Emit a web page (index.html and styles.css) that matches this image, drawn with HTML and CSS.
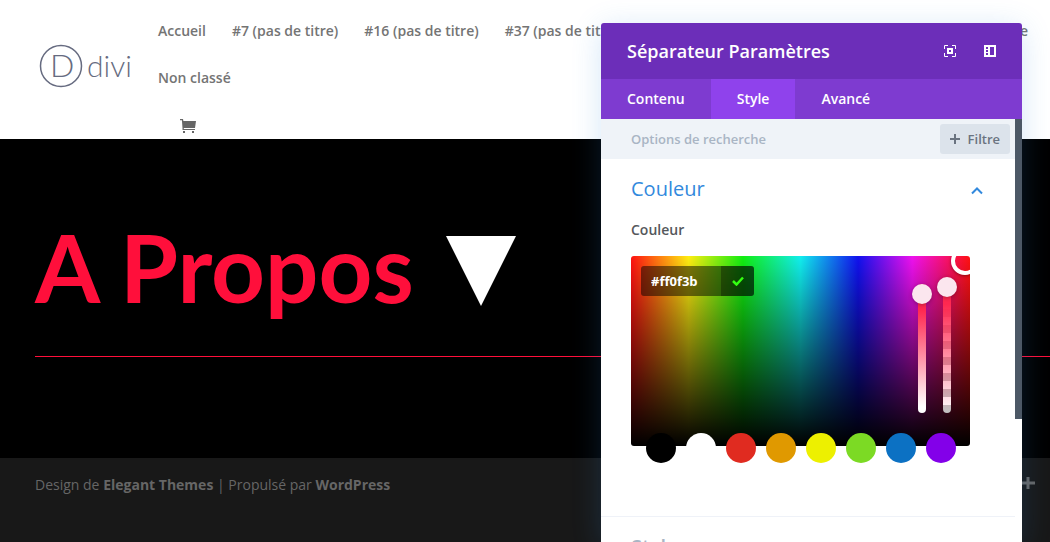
FILE: index.html
```html
<!DOCTYPE html>
<html lang="fr">
<head>
<meta charset="utf-8">
<meta name="viewport" content="width=device-width, initial-scale=1">
<title>A Propos</title>
<link rel="stylesheet" href="styles.css">
</head>
<body>
<header class="site-header">
  <a class="logo" href="#" aria-label="Divi">
    <svg width="94" height="44" viewBox="0 0 94 44">
      <circle cx="22" cy="22" r="20.5" fill="none" stroke="currentColor" stroke-width="1.5"/>
      <text class="logo-letter" x="11" y="33">D</text>
      <text class="logo-word" x="48" y="33">divi</text>
    </svg>
  </a>
  <div class="menu">
    <nav>
      <ul class="nav-list">
        <li><a href="#">Accueil</a></li>
        <li><a href="#">#7 (pas de titre)</a></li>
        <li><a href="#">#16 (pas de titre)</a></li>
        <li><a href="#">#37 (pas de titre)</a></li>
        <li class="nav-last"><a href="#">Page d’exemple</a></li>
        <li><a href="#">Non classé</a></li>
      </ul>
    </nav>
    <a class="cart" href="#" aria-label="Panier">
      <svg width="16" height="14" viewBox="0 0 16 14" fill="currentColor">
        <path d="M0 0h3l.4 2H16l-1 7H3.800v1H15v1H2.500V9L1.900 1.300H0z"/>
        <rect x="3" y="12" width="2" height="2"/><rect x="12" y="12" width="2" height="2"/>
      </svg>
    </a>
  </div>
</header>

<main class="hero">
  <div class="hero-title">
    <h1>A Propos</h1>
    <svg width="70" height="70" viewBox="0 0 70 70"><path d="M0 0h70L35 70z" fill="#fff"/></svg>
  </div>
  <hr class="divider">
</main>

<footer class="site-footer">
  <p>Design de <a href="#">Elegant Themes</a> | Propulsé par <a href="#">WordPress</a></p>
  <a class="more" href="#" aria-label="Plus">
    <svg width="14" height="12" viewBox="0 0 14 12"><path d="M7 0v12M0 6h14" stroke="currentColor" stroke-width="3"/></svg>
  </a>
</footer>

<aside class="panel">
  <header class="panel-head">
    <h2>Séparateur Paramètres</h2>
    <div class="panel-actions">
      <button type="button" aria-label="Plein écran">
        <svg width="12" height="12" viewBox="0 0 12 12" fill="none" stroke="currentColor">
          <path d="M.5 4V.5H4M8 .5h3.500V4M11.500 8v3.500H8M4 11.500H.5V8"/>
          <path d="M4 4h4v4H4z" stroke-width="2"/>
        </svg>
      </button>
      <button type="button" aria-label="Position">
        <svg width="12" height="12" viewBox="0 0 12 12" fill="currentColor">
          <path fill-rule="evenodd" d="M0 0h12v12H0zM6 2v8h4V2zM2 2v2h2V2zM2 5v2h2V5zM2 8v2h2V8z"/>
        </svg>
      </button>
    </div>
  </header>
  <div class="tabs" role="tablist">
    <button type="button" role="tab">Contenu</button>
    <button type="button" role="tab" class="active" aria-selected="true">Style</button>
    <button type="button" role="tab">Avancé</button>
  </div>
  <div class="panel-body">
    <div class="panel-scroll">
      <div class="search">
        <input type="text" placeholder="Options de recherche" aria-label="Options de recherche">
        <button type="button" class="filter">
          <svg width="10" height="10" viewBox="0 0 10 10"><path d="M5 0v10M0 5h10" stroke="currentColor" stroke-width="2"/></svg>
          Filtre
        </button>
      </div>
      <section class="group">
        <button type="button" class="group-title">
          Couleur
          <svg width="12" height="8" viewBox="0 0 12 8"><path d="M1 6.500l5-5 5 5" fill="none" stroke="currentColor" stroke-width="2"/></svg>
        </button>
        <label class="field-label" for="hex">Couleur</label>
        <div class="picker">
          <span class="picker-point"></span>
          <div class="hex">
            <input id="hex" type="text" value="#ff0f3b">
            <button type="button" aria-label="Valider">
              <svg width="12" height="10" viewBox="0 0 12 10"><path d="M1 5l3.500 3.500L11 1.500" fill="none" stroke="currentColor" stroke-width="2.500"/></svg>
            </button>
          </div>
          <div class="sliders">
            <input class="slider saturation" type="range" min="0" max="100" value="0" aria-label="Saturation">
            <input class="slider alpha" type="range" min="0" max="100" value="0" aria-label="Opacité">
          </div>
        </div>
        <div class="swatches">
          <button type="button" class="black" aria-label="Noir"></button>
          <button type="button" class="white" aria-label="Blanc"></button>
          <button type="button" class="red" aria-label="Rouge"></button>
          <button type="button" class="orange" aria-label="Orange"></button>
          <button type="button" class="yellow" aria-label="Jaune"></button>
          <button type="button" class="green" aria-label="Vert"></button>
          <button type="button" class="blue" aria-label="Bleu"></button>
          <button type="button" class="purple" aria-label="Violet"></button>
        </div>
      </section>
      <section class="group closed">
        <button type="button" class="group-title">Style</button>
      </section>
    </div>
    <div class="scrollbar"></div>
  </div>
</aside>
</body>
</html>
```
FILE: styles.css
```css
* { box-sizing: border-box; }

body {
  margin: 0;
  height: 100vh;
  overflow: hidden;
  display: flex;
  flex-direction: column;
  position: relative;
  background: #fff;
  color: #666;
  font: 14px/24px "Open Sans", "Noto Sans", sans-serif;
}

a { color: inherit; text-decoration: none; }
button, input { font: inherit; color: inherit; border: 0; padding: 0; margin: 0; background: none; }
svg { display: block; }
h1, h2, p { margin: 0; }

.site-header {
  display: flex;
  gap: 25px;
  padding: 19px 22px 6px 39px;
}
.logo { color: #666b80; padding-top: 25px; }
.logo-letter, .logo-word { font-family: Lato, sans-serif; font-weight: 300; fill: currentColor; }
.logo-letter { font-size: 32px; }
.logo-word { font-size: 30px; }
.menu { flex: 1; }
.nav-list {
  display: flex;
  flex-wrap: wrap;
  gap: 23px 26px;
  margin: 0;
  padding: 0;
  list-style: none;
  color: #747474;
  font-weight: 600;
}
.nav-last { flex: 1 0 350px; text-align: right; }
.cart { display: block; width: 16px; margin: 29px 0 0 22px; }

.hero {
  background: #000;
  padding: 69px 0 101px 35px;
}
.hero-title { display: flex; align-items: center; gap: 32px; }
.hero-title h1 {
  padding-bottom: 8px;
  color: #ff0f3b;
  font: 700 94px/118px "Trebuchet MS", Lato, sans-serif;
}
.divider { margin: 22px 0 0; border: 0; height: 1px; background: #ff0f3b; }

.site-footer {
  flex: 1;
  display: flex;
  align-items: flex-start;
  justify-content: space-between;
  padding: 15px 15px 0 35px;
  background: #181818;
}
.site-footer a { font-weight: 700; }
.site-footer .more { padding-top: 4px; }

.panel {
  position: absolute;
  top: 23px;
  right: 28px;
  bottom: 0;
  width: 421px;
  display: flex;
  flex-direction: column;
  overflow: hidden;
  border-radius: 3px 3px 0 0;
  background: #fff;
  box-shadow: 0 5px 30px rgba(43, 135, 218, 0.2);
  font-weight: 600;
}
.panel-head {
  flex: none;
  display: flex;
  align-items: center;
  justify-content: space-between;
  padding: 16px 26px;
  background: #6c2eb9;
  color: #fff;
}
.panel-head h2 { font-size: 18px; font-weight: 600; }
.panel-actions { display: flex; gap: 28px; }
.tabs { flex: none; display: flex; background: #7e3bd0; color: #fff; }
.tabs button { padding: 8px 26px; font-weight: 600; }
.tabs .active { background: #8f42ec; }

.panel-body { flex: 1; min-height: 0; display: flex; }
.panel-scroll { flex: 1; min-width: 0; overflow: hidden; }
.scrollbar { width: 7px; height: 300px; background: #4c5866; }

.search {
  display: flex;
  align-items: center;
  padding: 5px 5px 5px 30px;
  background: #eff3f8;
  font-size: 13px;
}
.search input { flex: 1; min-width: 0; }
.search input::placeholder { color: #a9b5c4; opacity: 1; }
.filter {
  display: flex;
  align-items: center;
  gap: 8px;
  padding: 3px 10px;
  border-radius: 3px;
  background: #dce3eb;
  color: #6a7380;
}

.group { padding: 18px 30px 53px; }
.group-title {
  width: 100%;
  display: flex;
  align-items: center;
  justify-content: space-between;
  padding-right: 2px;
  color: #3289dd;
  font-size: 20px;
  font-weight: 400;
}
.group-title svg { margin-top: 4px; }
.field-label { display: block; margin: 17px 0 14px; color: #55585c; }
.closed { border-top: 1px solid #eff2f8; }
.closed .group-title { color: #a9b5c4; font-weight: 600; }

.picker {
  position: relative;
  display: flex;
  align-items: flex-start;
  justify-content: space-between;
  width: 339px;
  max-width: 100%;
  height: 190px;
  padding: 10px 13px 10px 10px;
  overflow: hidden;
  border-radius: 3px;
  background:
    linear-gradient(rgba(0, 0, 0, 0), #000),
    linear-gradient(90deg, #f11, #fe1 17%, #1e1 33%, #1ee 50%, #11e 67%, #e1e 83%, #f11);
}
.picker-point {
  position: absolute;
  top: -9px;
  right: -9px;
  width: 28px;
  height: 28px;
  border: 4px solid #fff;
  border-radius: 50%;
  box-shadow: 0 1px 3px rgba(0, 0, 0, 0.4);
}
.hex {
  display: flex;
  width: 113px;
  height: 30px;
  overflow: hidden;
  border-radius: 3px;
  background: rgba(0, 0, 0, 0.5);
}
.hex input { flex: 1; min-width: 0; padding-left: 10px; color: #fff; font-size: 13px; font-weight: 700; }
.hex button {
  width: 33px;
  display: grid;
  place-items: center;
  background: rgba(0, 0, 0, 0.3);
  color: #3f1;
}
.sliders { display: flex; align-items: flex-end; gap: 17px; height: 147px; padding-right: 6px; }
.slider {
  appearance: none;
  writing-mode: vertical-lr;
  width: 8px;
  border-radius: 4px;
}
.slider::-webkit-slider-thumb {
  appearance: none;
  width: 20px;
  height: 20px;
  border-radius: 50%;
  background: #fbe6ee;
  box-shadow: 0 1px 4px rgba(0, 0, 0, 0.3);
}
.saturation { height: 129px; background: linear-gradient(#ff2850 20%, #fff 95%); }
.alpha {
  height: 136px;
  background:
    linear-gradient(#ff2850 20%, rgba(255, 255, 255, 0.1)),
    repeating-linear-gradient(0deg, #bbb 0 8px, #fff 8px 16px);
}

.swatches { display: flex; gap: 10px; margin: -13px 0 0 15px; position: relative; }
.swatches button { width: 30px; height: 30px; border-radius: 50%; }
.black { background: #000; }
.white { background: #fff; }
.red { background: #e02b20; }
.orange { background: #e09900; }
.yellow { background: #edf000; }
.green { background: #7cda24; }
.blue { background: #0c71c3; }
.purple { background: #8300e9; }
```
